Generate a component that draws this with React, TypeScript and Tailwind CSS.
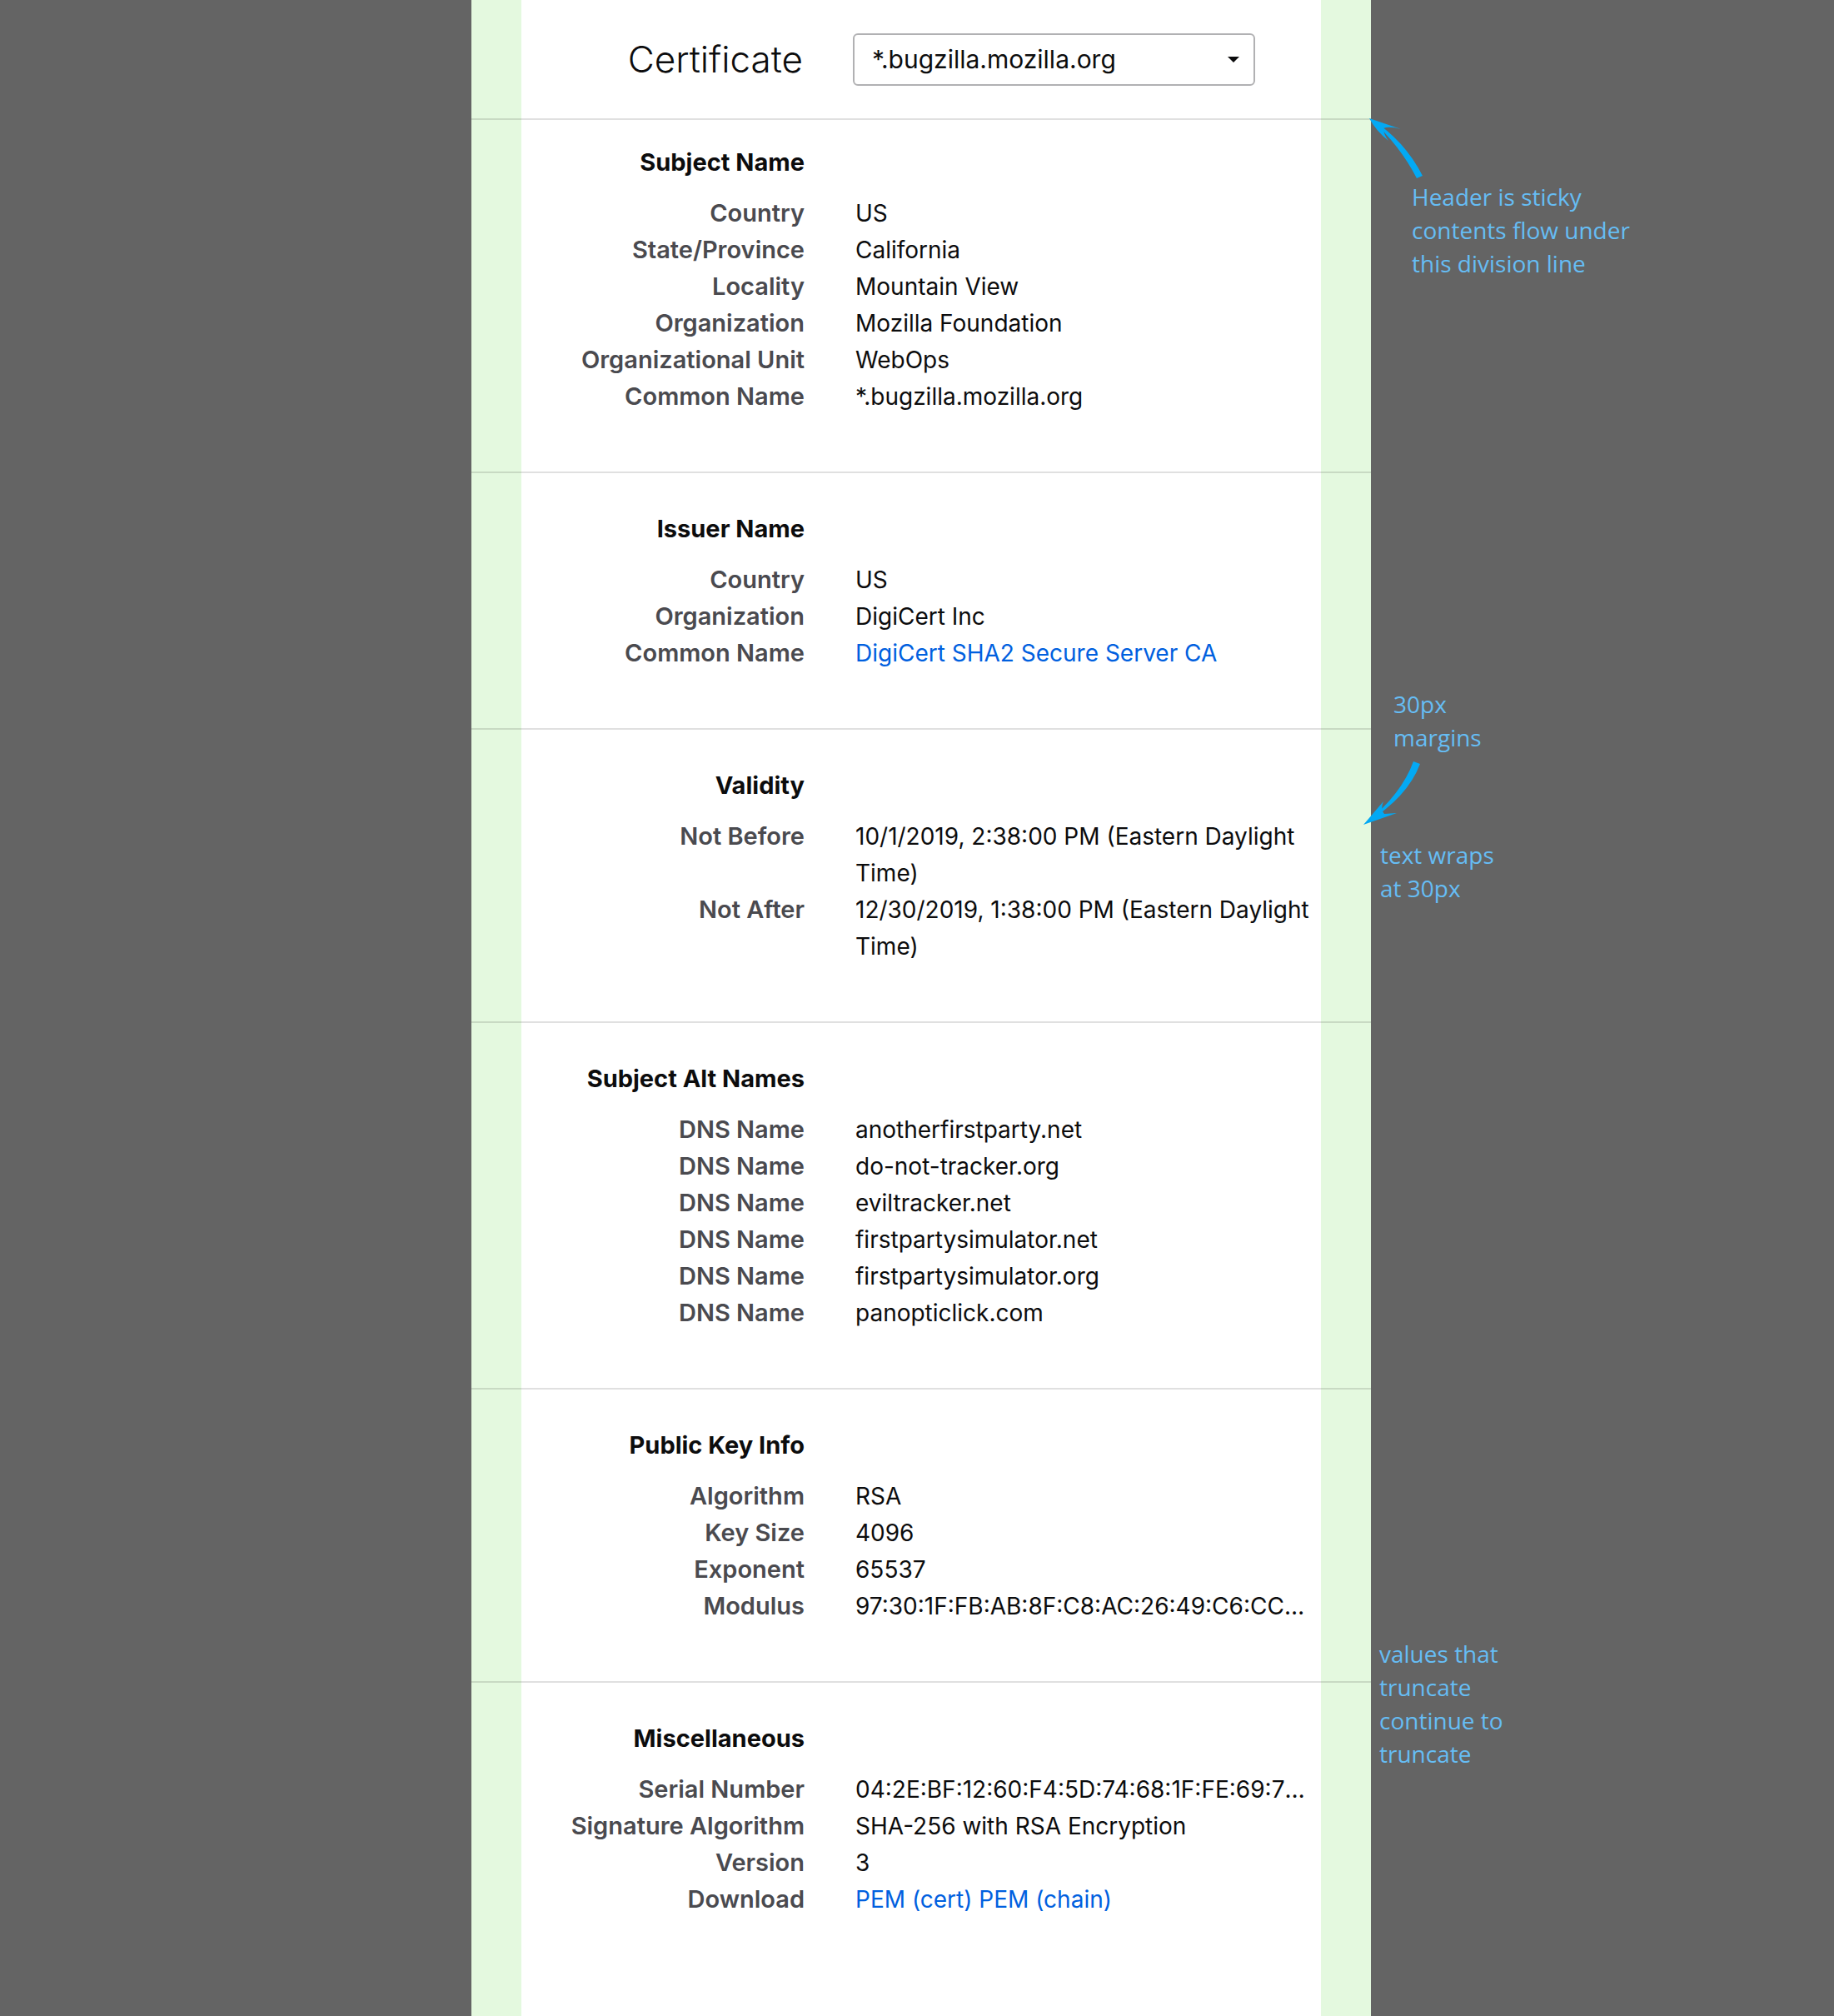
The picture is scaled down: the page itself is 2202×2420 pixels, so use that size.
import React from 'react';

type Row = { label: string; value: React.ReactNode; truncate?: boolean };
type Section = { title: string; rows: Row[] };

const Link = ({ children }: { children: React.ReactNode }) => (
  <a className="cursor-pointer text-[#0060df]">{children}</a>
);

const sections: Section[] = [
  {
    title: 'Subject Name',
    rows: [
      { label: 'Country', value: 'US' },
      { label: 'State/Province', value: 'California' },
      { label: 'Locality', value: 'Mountain View' },
      { label: 'Organization', value: 'Mozilla Foundation' },
      { label: 'Organizational Unit', value: 'WebOps' },
      { label: 'Common Name', value: '*.bugzilla.mozilla.org' },
    ],
  },
  {
    title: 'Issuer Name',
    rows: [
      { label: 'Country', value: 'US' },
      { label: 'Organization', value: 'DigiCert Inc' },
      { label: 'Common Name', value: <Link>DigiCert SHA2 Secure Server CA</Link> },
    ],
  },
  {
    title: 'Validity',
    rows: [
      { label: 'Not Before', value: '10/1/2019, 2:38:00 PM (Eastern Daylight Time)' },
      { label: 'Not After', value: '12/30/2019, 1:38:00 PM (Eastern Daylight Time)' },
    ],
  },
  {
    title: 'Subject Alt Names',
    rows: [
      { label: 'DNS Name', value: 'anotherfirstparty.net' },
      { label: 'DNS Name', value: 'do-not-tracker.org' },
      { label: 'DNS Name', value: 'eviltracker.net' },
      { label: 'DNS Name', value: 'firstpartysimulator.net' },
      { label: 'DNS Name', value: 'firstpartysimulator.org' },
      { label: 'DNS Name', value: 'panopticlick.com' },
    ],
  },
  {
    title: 'Public Key Info',
    rows: [
      { label: 'Algorithm', value: 'RSA' },
      { label: 'Key Size', value: '4096' },
      { label: 'Exponent', value: '65537' },
      {
        label: 'Modulus',
        value:
          '97:30:1F:FB:AB:8F:C8:AC:26:49:C6:CC:72:4E:01:5B:9E:33:BF:61:D0:0A:43:7B:9D:C5:C1:0E',
        truncate: true,
      },
    ],
  },
  {
    title: 'Miscellaneous',
    rows: [
      {
        label: 'Serial Number',
        value: '04:2E:BF:12:60:F4:5D:74:68:1F:FE:69:7B:8A:2C:DF',
        truncate: true,
      },
      { label: 'Signature Algorithm', value: 'SHA-256 with RSA Encryption' },
      { label: 'Version', value: '3' },
      {
        label: 'Download',
        value: (
          <>
            <Link>PEM (cert)</Link> <Link>PEM (chain)</Link>
          </>
        ),
      },
    ],
  },
];

function CertSection({ section, first, last }: { section: Section; first: boolean; last: boolean }) {
  return (
    <section
      className={`px-[60px] ${first ? 'pt-[29px]' : 'pt-[45px]'} ${
        last ? 'flex-1' : 'border-b-2 border-black/[0.12] pb-[68px]'
      }`}
    >
      <div className="grid grid-cols-[340px_559px] gap-x-[61px] leading-[44px]">
        <h2 className="mb-[17px] text-right text-[29px] font-bold text-[#0c0c0d]">{section.title}</h2>
        <div />
        {section.rows.map((row, i) => (
          <React.Fragment key={i}>
            <div className="text-right text-[29px] font-semibold text-[#4a4a4f]">{row.label}</div>
            <div
              className={`text-[28px] text-[#0c0c0d] ${
                row.truncate ? 'max-w-[543px] overflow-hidden text-ellipsis whitespace-nowrap' : ''
              }`}
            >
              {row.value}
            </div>
          </React.Fragment>
        ))}
      </div>
    </section>
  );
}

function Note({ className, lines }: { className: string; lines: string[] }) {
  return (
    <div
      className={`absolute font-['Open_Sans',sans-serif] text-[28px] leading-[40px] text-[#66bdf4] ${className}`}
    >
      {lines.map((l) => (
        <div key={l}>{l}</div>
      ))}
    </div>
  );
}

export default function App() {
  return (
    <div className="relative h-[2420px] w-[2202px] overflow-hidden bg-[#646464] font-[Inter,sans-serif]">
      {/* the certificate page, with its 30px margins shown in green */}
      <div className="ml-[566px] flex h-full w-[1080px] flex-col bg-[linear-gradient(to_right,#e4f9df_60px,#fff_60px,#fff_1020px,#e4f9df_1020px)]">
        <header className="border-b-2 border-black/[0.12] px-[60px]">
          <div className="flex h-[142px] items-center">
            <h1 className="w-[338px] text-right text-[44px] font-light text-[#0c0c0d]">Certificate</h1>
            <div className="ml-[60px] flex h-[63px] w-[483px] items-center justify-between rounded-[6px] border-2 border-[#b1b1b3] pl-[21px] pr-[17px]">
              <span className="text-[30px] text-[#0c0c0d]">*.bugzilla.mozilla.org</span>
              <svg width="14" height="7" viewBox="0 0 14 7">
                <path d="M0 0h14L7 7z" fill="#0c0c0d" />
              </svg>
            </div>
          </div>
        </header>
        {sections.map((s, i) => (
          <CertSection key={s.title} section={s} first={i === 0} last={i === sections.length - 1} />
        ))}
      </div>

      {/* annotations */}
      <svg className="pointer-events-none absolute left-0 top-0" width="2202" height="2420">
        <g fill="#03a9f4">
          <path d="M1646 143 Q1686 168 1708 211 L1701 214 Q1681 175 1646 143 Z" />
          <path d="M1644 142 L1682 155 Q1668 151 1661 154 Q1661 161 1667 169 Q1652 157 1644 142 Z" />
          <path d="M1705 917 Q1690 957 1640 988 Q1683 953 1697 914 Z" />
          <path d="M1637 990 L1661 962 Q1657 971 1662 977 L1677 976 Q1657 983 1637 990 Z" />
        </g>
      </svg>
      <Note
        className="left-[1695px] top-[216px]"
        lines={['Header is sticky', 'contents flow under', 'this division line']}
      />
      <Note className="left-[1673px] top-[825px]" lines={['30px', 'margins']} />
      <Note className="left-[1657px] top-[1006px]" lines={['text wraps', 'at 30px']} />
      <Note
        className="left-[1656px] top-[1965px]"
        lines={['values that', 'truncate', 'continue to', 'truncate']}
      />
    </div>
  );
}
